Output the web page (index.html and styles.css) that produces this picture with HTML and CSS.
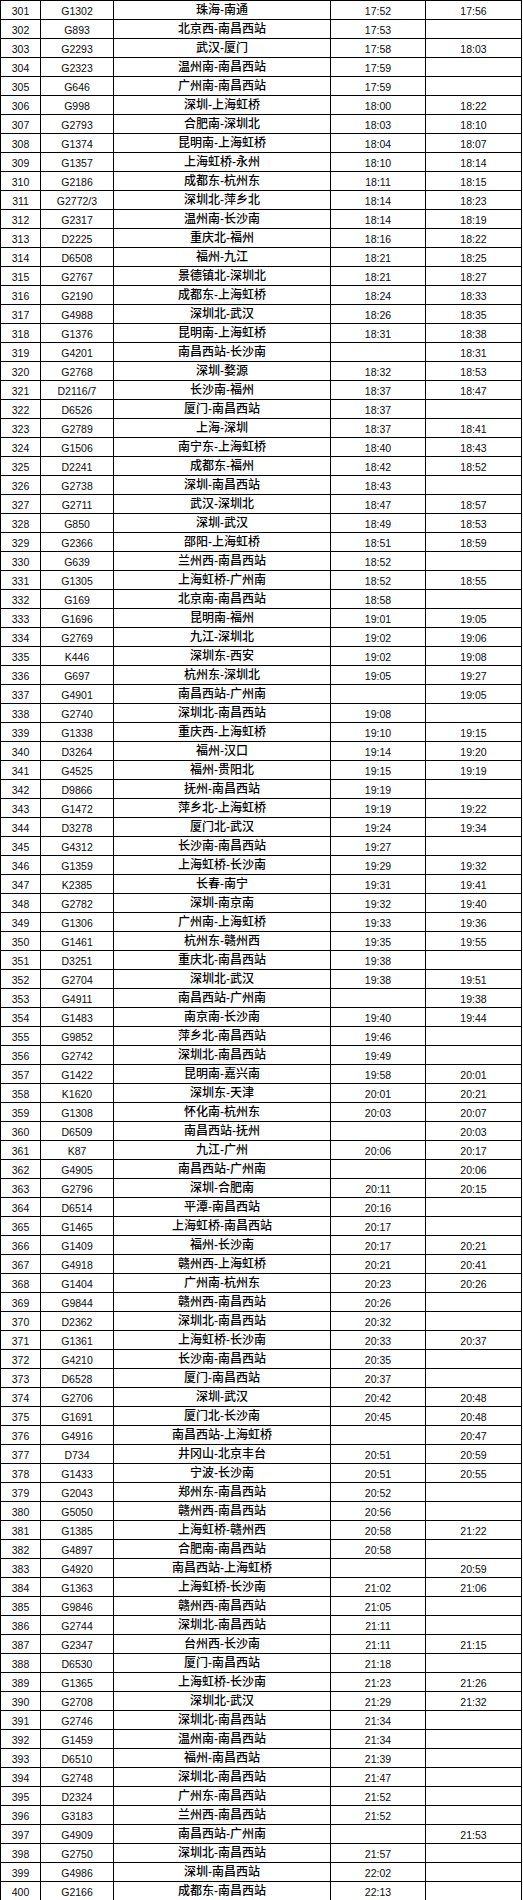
FILE: index.html
```html
<!DOCTYPE html>
<html lang="zh-CN">
<head>
<meta charset="utf-8">
<title>列车时刻表</title>
<link rel="stylesheet" href="styles.css">
</head>
<body>
<table class="tt">
<colgroup><col class="c1"><col class="c2"><col class="c3"><col class="c4"><col class="c5"></colgroup>
<tbody>
<tr><td>301</td><td>G1302</td><td class="r">珠海-南通</td><td>17:52</td><td>17:56</td></tr>
<tr><td>302</td><td>G893</td><td class="r">北京西-南昌西站</td><td>17:53</td><td></td></tr>
<tr><td>303</td><td>G2293</td><td class="r">武汉-厦门</td><td>17:58</td><td>18:03</td></tr>
<tr><td>304</td><td>G2323</td><td class="r">温州南-南昌西站</td><td>17:59</td><td></td></tr>
<tr><td>305</td><td>G646</td><td class="r">广州南-南昌西站</td><td>17:59</td><td></td></tr>
<tr><td>306</td><td>G998</td><td class="r">深圳-上海虹桥</td><td>18:00</td><td>18:22</td></tr>
<tr><td>307</td><td>G2793</td><td class="r">合肥南-深圳北</td><td>18:03</td><td>18:10</td></tr>
<tr><td>308</td><td>G1374</td><td class="r">昆明南-上海虹桥</td><td>18:04</td><td>18:07</td></tr>
<tr><td>309</td><td>G1357</td><td class="r">上海虹桥-永州</td><td>18:10</td><td>18:14</td></tr>
<tr><td>310</td><td>G2186</td><td class="r">成都东-杭州东</td><td>18:11</td><td>18:15</td></tr>
<tr><td>311</td><td>G2772/3</td><td class="r">深圳北-萍乡北</td><td>18:14</td><td>18:23</td></tr>
<tr><td>312</td><td>G2317</td><td class="r">温州南-长沙南</td><td>18:14</td><td>18:19</td></tr>
<tr><td>313</td><td>D2225</td><td class="r">重庆北-福州</td><td>18:16</td><td>18:22</td></tr>
<tr><td>314</td><td>D6508</td><td class="r">福州-九江</td><td>18:21</td><td>18:25</td></tr>
<tr><td>315</td><td>G2767</td><td class="r">景德镇北-深圳北</td><td>18:21</td><td>18:27</td></tr>
<tr><td>316</td><td>G2190</td><td class="r">成都东-上海虹桥</td><td>18:24</td><td>18:33</td></tr>
<tr><td>317</td><td>G4988</td><td class="r">深圳北-武汉</td><td>18:26</td><td>18:35</td></tr>
<tr><td>318</td><td>G1376</td><td class="r">昆明南-上海虹桥</td><td>18:31</td><td>18:38</td></tr>
<tr><td>319</td><td>G4201</td><td class="r">南昌西站-长沙南</td><td></td><td>18:31</td></tr>
<tr><td>320</td><td>G2768</td><td class="r">深圳-婺源</td><td>18:32</td><td>18:53</td></tr>
<tr><td>321</td><td>D2116/7</td><td class="r">长沙南-福州</td><td>18:37</td><td>18:47</td></tr>
<tr><td>322</td><td>D6526</td><td class="r">厦门-南昌西站</td><td>18:37</td><td></td></tr>
<tr><td>323</td><td>G2789</td><td class="r">上海-深圳</td><td>18:37</td><td>18:41</td></tr>
<tr><td>324</td><td>G1506</td><td class="r">南宁东-上海虹桥</td><td>18:40</td><td>18:43</td></tr>
<tr><td>325</td><td>D2241</td><td class="r">成都东-福州</td><td>18:42</td><td>18:52</td></tr>
<tr><td>326</td><td>G2738</td><td class="r">深圳-南昌西站</td><td>18:43</td><td></td></tr>
<tr><td>327</td><td>G2711</td><td class="r">武汉-深圳北</td><td>18:47</td><td>18:57</td></tr>
<tr><td>328</td><td>G850</td><td class="r">深圳-武汉</td><td>18:49</td><td>18:53</td></tr>
<tr><td>329</td><td>G2366</td><td class="r">邵阳-上海虹桥</td><td>18:51</td><td>18:59</td></tr>
<tr><td>330</td><td>G639</td><td class="r">兰州西-南昌西站</td><td>18:52</td><td></td></tr>
<tr><td>331</td><td>G1305</td><td class="r">上海虹桥-广州南</td><td>18:52</td><td>18:55</td></tr>
<tr><td>332</td><td>G169</td><td class="r">北京南-南昌西站</td><td>18:58</td><td></td></tr>
<tr><td>333</td><td>G1696</td><td class="r">昆明南-福州</td><td>19:01</td><td>19:05</td></tr>
<tr><td>334</td><td>G2769</td><td class="r">九江-深圳北</td><td>19:02</td><td>19:06</td></tr>
<tr><td>335</td><td>K446</td><td class="r">深圳东-西安</td><td>19:02</td><td>19:08</td></tr>
<tr><td>336</td><td>G697</td><td class="r">杭州东-深圳北</td><td>19:05</td><td>19:27</td></tr>
<tr><td>337</td><td>G4901</td><td class="r">南昌西站-广州南</td><td></td><td>19:05</td></tr>
<tr><td>338</td><td>G2740</td><td class="r">深圳北-南昌西站</td><td>19:08</td><td></td></tr>
<tr><td>339</td><td>G1338</td><td class="r">重庆西-上海虹桥</td><td>19:10</td><td>19:15</td></tr>
<tr><td>340</td><td>D3264</td><td class="r">福州-汉口</td><td>19:14</td><td>19:20</td></tr>
<tr><td>341</td><td>G4525</td><td class="r">福州-贵阳北</td><td>19:15</td><td>19:19</td></tr>
<tr><td>342</td><td>D9866</td><td class="r">抚州-南昌西站</td><td>19:19</td><td></td></tr>
<tr><td>343</td><td>G1472</td><td class="r">萍乡北-上海虹桥</td><td>19:19</td><td>19:22</td></tr>
<tr><td>344</td><td>D3278</td><td class="r">厦门北-武汉</td><td>19:24</td><td>19:34</td></tr>
<tr><td>345</td><td>G4312</td><td class="r">长沙南-南昌西站</td><td>19:27</td><td></td></tr>
<tr><td>346</td><td>G1359</td><td class="r">上海虹桥-长沙南</td><td>19:29</td><td>19:32</td></tr>
<tr><td>347</td><td>K2385</td><td class="r">长春-南宁</td><td>19:31</td><td>19:41</td></tr>
<tr><td>348</td><td>G2782</td><td class="r">深圳-南京南</td><td>19:32</td><td>19:40</td></tr>
<tr><td>349</td><td>G1306</td><td class="r">广州南-上海虹桥</td><td>19:33</td><td>19:36</td></tr>
<tr><td>350</td><td>G1461</td><td class="r">杭州东-赣州西</td><td>19:35</td><td>19:55</td></tr>
<tr><td>351</td><td>D3251</td><td class="r">重庆北-南昌西站</td><td>19:38</td><td></td></tr>
<tr><td>352</td><td>G2704</td><td class="r">深圳北-武汉</td><td>19:38</td><td>19:51</td></tr>
<tr><td>353</td><td>G4911</td><td class="r">南昌西站-广州南</td><td></td><td>19:38</td></tr>
<tr><td>354</td><td>G1483</td><td class="r">南京南-长沙南</td><td>19:40</td><td>19:44</td></tr>
<tr><td>355</td><td>G9852</td><td class="r">萍乡北-南昌西站</td><td>19:46</td><td></td></tr>
<tr><td>356</td><td>G2742</td><td class="r">深圳北-南昌西站</td><td>19:49</td><td></td></tr>
<tr><td>357</td><td>G1422</td><td class="r">昆明南-嘉兴南</td><td>19:58</td><td>20:01</td></tr>
<tr><td>358</td><td>K1620</td><td class="r">深圳东-天津</td><td>20:01</td><td>20:21</td></tr>
<tr><td>359</td><td>G1308</td><td class="r">怀化南-杭州东</td><td>20:03</td><td>20:07</td></tr>
<tr><td>360</td><td>D6509</td><td class="r">南昌西站-抚州</td><td></td><td>20:03</td></tr>
<tr><td>361</td><td>K87</td><td class="r">九江-广州</td><td>20:06</td><td>20:17</td></tr>
<tr><td>362</td><td>G4905</td><td class="r">南昌西站-广州南</td><td></td><td>20:06</td></tr>
<tr><td>363</td><td>G2796</td><td class="r">深圳-合肥南</td><td>20:11</td><td>20:15</td></tr>
<tr><td>364</td><td>D6514</td><td class="r">平潭-南昌西站</td><td>20:16</td><td></td></tr>
<tr><td>365</td><td>G1465</td><td class="r">上海虹桥-南昌西站</td><td>20:17</td><td></td></tr>
<tr><td>366</td><td>G1409</td><td class="r">福州-长沙南</td><td>20:17</td><td>20:21</td></tr>
<tr><td>367</td><td>G4918</td><td class="r">赣州西-上海虹桥</td><td>20:21</td><td>20:41</td></tr>
<tr><td>368</td><td>G1404</td><td class="r">广州南-杭州东</td><td>20:23</td><td>20:26</td></tr>
<tr><td>369</td><td>G9844</td><td class="r">赣州西-南昌西站</td><td>20:26</td><td></td></tr>
<tr><td>370</td><td>D2362</td><td class="r">深圳北-南昌西站</td><td>20:32</td><td></td></tr>
<tr><td>371</td><td>G1361</td><td class="r">上海虹桥-长沙南</td><td>20:33</td><td>20:37</td></tr>
<tr><td>372</td><td>G4210</td><td class="r">长沙南-南昌西站</td><td>20:35</td><td></td></tr>
<tr><td>373</td><td>D6528</td><td class="r">厦门-南昌西站</td><td>20:37</td><td></td></tr>
<tr><td>374</td><td>G2706</td><td class="r">深圳-武汉</td><td>20:42</td><td>20:48</td></tr>
<tr><td>375</td><td>G1691</td><td class="r">厦门北-长沙南</td><td>20:45</td><td>20:48</td></tr>
<tr><td>376</td><td>G4916</td><td class="r">南昌西站-上海虹桥</td><td></td><td>20:47</td></tr>
<tr><td>377</td><td>D734</td><td class="r">井冈山-北京丰台</td><td>20:51</td><td>20:59</td></tr>
<tr><td>378</td><td>G1433</td><td class="r">宁波-长沙南</td><td>20:51</td><td>20:55</td></tr>
<tr><td>379</td><td>G2043</td><td class="r">郑州东-南昌西站</td><td>20:52</td><td></td></tr>
<tr><td>380</td><td>G5050</td><td class="r">赣州西-南昌西站</td><td>20:56</td><td></td></tr>
<tr><td>381</td><td>G1385</td><td class="r">上海虹桥-赣州西</td><td>20:58</td><td>21:22</td></tr>
<tr><td>382</td><td>G4897</td><td class="r">合肥南-南昌西站</td><td>20:58</td><td></td></tr>
<tr><td>383</td><td>G4920</td><td class="r">南昌西站-上海虹桥</td><td></td><td>20:59</td></tr>
<tr><td>384</td><td>G1363</td><td class="r">上海虹桥-长沙南</td><td>21:02</td><td>21:06</td></tr>
<tr><td>385</td><td>G9846</td><td class="r">赣州西-南昌西站</td><td>21:05</td><td></td></tr>
<tr><td>386</td><td>G2744</td><td class="r">深圳北-南昌西站</td><td>21:11</td><td></td></tr>
<tr><td>387</td><td>G2347</td><td class="r">台州西-长沙南</td><td>21:11</td><td>21:15</td></tr>
<tr><td>388</td><td>D6530</td><td class="r">厦门-南昌西站</td><td>21:18</td><td></td></tr>
<tr><td>389</td><td>G1365</td><td class="r">上海虹桥-长沙南</td><td>21:23</td><td>21:26</td></tr>
<tr><td>390</td><td>G2708</td><td class="r">深圳北-武汉</td><td>21:29</td><td>21:32</td></tr>
<tr><td>391</td><td>G2746</td><td class="r">深圳北-南昌西站</td><td>21:34</td><td></td></tr>
<tr><td>392</td><td>G1459</td><td class="r">温州南-南昌西站</td><td>21:34</td><td></td></tr>
<tr><td>393</td><td>D6510</td><td class="r">福州-南昌西站</td><td>21:39</td><td></td></tr>
<tr><td>394</td><td>G2748</td><td class="r">深圳北-南昌西站</td><td>21:47</td><td></td></tr>
<tr><td>395</td><td>D2324</td><td class="r">广州东-南昌西站</td><td>21:52</td><td></td></tr>
<tr><td>396</td><td>G3183</td><td class="r">兰州西-南昌西站</td><td>21:52</td><td></td></tr>
<tr><td>397</td><td>G4909</td><td class="r">南昌西站-广州南</td><td></td><td>21:53</td></tr>
<tr><td>398</td><td>G2750</td><td class="r">深圳北-南昌西站</td><td>21:57</td><td></td></tr>
<tr><td>399</td><td>G4986</td><td class="r">深圳-南昌西站</td><td>22:02</td><td></td></tr>
<tr><td>400</td><td>G2166</td><td class="r">成都东-南昌西站</td><td>22:13</td><td></td></tr>
</tbody>
</table>
</body>
</html>
```

FILE: styles.css
```css
html, body {
  margin: 0;
  padding: 0;
  background: #ffffff;
}

.tt {
  border-collapse: collapse;
  table-layout: fixed;
  width: 522px;
  font-family: "Liberation Sans", Arial, "Noto Sans CJK SC", sans-serif;
  font-size: 10.5px;
  color: #0a0a0a;
}

.c1 { width: 40px; }
.c2 { width: 73px; }
.c3 { width: 217px; }
.c4 { width: 95px; }
.c5 { width: 96px; }

.tt tr {
  height: 19px;
}

.tt td {
  border: 1px solid #000;
  height: 17px;
  padding: 1px 0 0 0;
  text-align: center;
  vertical-align: middle;
  line-height: 12px;
  white-space: nowrap;
  overflow: hidden;
}

.tt td.r {
  font-family: "Liberation Sans", "Noto Sans CJK SC", sans-serif;
  font-size: 12px;
  font-weight: 500;
  padding-top: 0;
  height: 18px;
  color: #000;
}
```
